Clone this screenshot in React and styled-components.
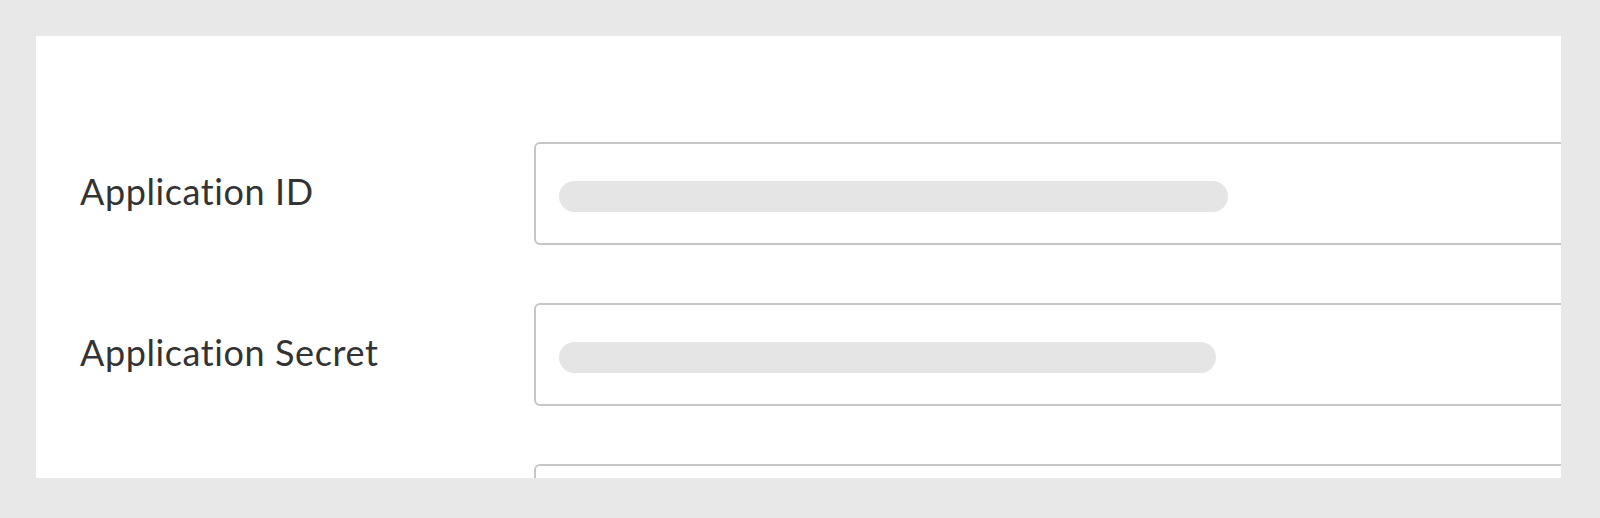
import React from 'react';
import styled, { createGlobalStyle } from 'styled-components';

const GlobalStyle = createGlobalStyle`
  html, body {
    margin: 0;
    padding: 0;
    background: #e8e8e8;
  }
  body {
    font-family: Lato, "Open Sans", sans-serif;
  }
`;

const Page = styled.div`
  width: 1600px;
  height: 518px;
  box-sizing: border-box;
  padding: 36px 39px 40px 36px;
`;

const Panel = styled.div`
  background: #ffffff;
  height: 442px;
  overflow: hidden;
  box-sizing: border-box;
  padding: 106px 0 0 44px;
  display: flex;
  flex-direction: column;
  gap: 58px;
`;

const Row = styled.div`
  display: grid;
  grid-template-columns: 454px 1100px;
  align-items: center;
`;

const Label = styled.label`
  font-size: 36px;
  color: #333333;
  letter-spacing: 0.6px;
  padding-bottom: 6px;
`;

const Field = styled.div`
  height: 103px;
  box-sizing: border-box;
  border: 2px solid #c6c6c6;
  border-radius: 6px;
  padding: 6px 0 0 23px;
  display: flex;
  align-items: center;
`;

const Redacted = styled.div`
  height: 31px;
  width: ${(p) => p.w}px;
  border-radius: 16px;
  background: #e5e5e5;
`;

const fields = [
  { label: 'Application ID', w: 669 },
  { label: 'Application Secret', w: 657 },
  { label: '', w: 0 },
];

export default function App() {
  return (
    <Page>
      <GlobalStyle />
      <Panel>
        {fields.map((f, i) => (
          <Row key={i}>
            <Label>{f.label}</Label>
            <Field>{f.w > 0 && <Redacted w={f.w} />}</Field>
          </Row>
        ))}
      </Panel>
    </Page>
  );
}
